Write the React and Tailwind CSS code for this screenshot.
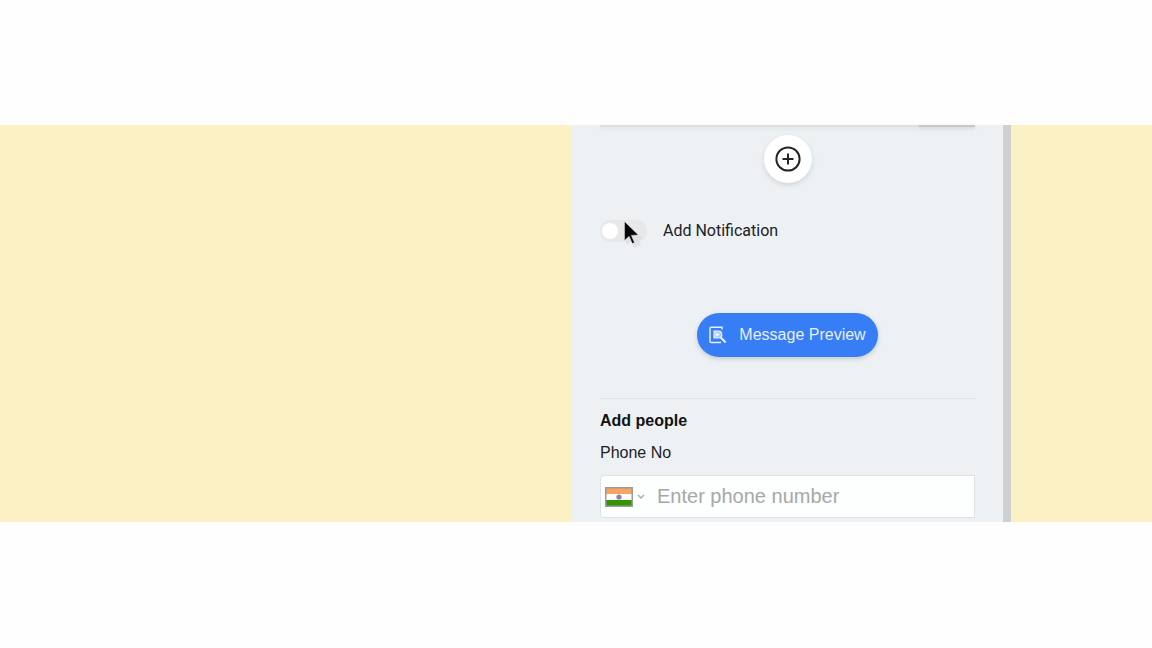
import React from "react";

function PlusCircle() {
  return (
    <svg viewBox="0 0 26 26" className="size-[26px]" fill="none" stroke="#222426" strokeWidth="2" aria-hidden="true">
      <circle cx="13" cy="13" r="11.6" />
      <path d="M13 7.5v11M7.5 13h11" />
    </svg>
  );
}

function PreviewIcon() {
  return (
    <svg viewBox="0 0 18 18" className="size-[18px] shrink-0" fill="none" stroke="#e6efff" strokeWidth="1.5" aria-hidden="true">
      <path d="M13 3.6V1.2H2.2C1.4 1.2 1 1.6 1 2.4v12.8c0 .8.4 1.2 1.2 1.2H12" />
      <path d="M5 5.2h4.4a3.4 3.4 0 0 1 0 6.8H5z" fill="#a9c7fc" strokeWidth="1.2" />
      <path d="M7 6.9l3.4 1.7L7 10.3z" fill="#fff" strokeWidth="1" />
      <path d="M11.8 11.4l4.8 5" strokeWidth="2.2" />
    </svg>
  );
}

function IndiaFlag() {
  return (
    <svg viewBox="0 0 28 20" className="h-5 w-7 shrink-0" aria-hidden="true">
      <rect width="28" height="20" fill="#9b9b9b" />
      <rect x="1.5" y="1.5" width="25" height="5.5" fill="#f8a45c" />
      <rect x="1.5" y="7" width="25" height="6" fill="#fff" />
      <rect x="1.5" y="13" width="25" height="5.5" fill="#319400" />
      <circle cx="14" cy="10" r="2.6" fill="#8580b8" />
    </svg>
  );
}

function Pointer() {
  return (
    <svg viewBox="0 0 20 28" className="pointer-events-none absolute top-0.5 left-6 h-7 w-5" aria-hidden="true">
      <path d="M2 6v18l5-3 3 6 7-3-2-5 4-2z" fill="#d9dbdd" opacity="0.6" />
      <path d="M0.5 0.5v19l4.6-4.2 3.2 7.3 2.2-1-3.2-7.2 7-.5z" fill="#050505" stroke="#fff" strokeWidth="0.4" />
    </svg>
  );
}

export default function App() {
  return (
    <main className="min-h-screen bg-[#fefefe] py-[125px] font-['Liberation_Sans',Arial,sans-serif] text-[#202224]">
      <div className="grid grid-cols-[572fr_439fr_141fr] bg-[#fcf0c5]">
        <section className="col-start-2 flex">
          <div className="flex min-w-0 flex-1 flex-col bg-[#edf1f4] px-7 pb-1">
            <div className="flex h-0.5 justify-end bg-[#dce0e2] shadow-[0_2px_4px_#dadee1]">
              <div className="w-14 bg-[#c6c9cc] shadow-sm" />
            </div>

            <button
              type="button"
              aria-label="Add block"
              className="mt-2 flex size-12 items-center justify-center self-center rounded-full bg-white shadow-[0_2px_5px_#d0d3d6]"
            >
              <PlusCircle />
            </button>

            <label className="relative mt-9 flex h-6 items-center gap-4 font-[Roboto,sans-serif] text-base">
              <input type="checkbox" role="switch" className="peer sr-only" />
              <span className="flex h-[22px] w-[47px] items-center rounded-full bg-[#e6e8ea] px-0.5">
                <span className="size-4 rounded-full bg-white" />
              </span>
              Add Notification
              <Pointer />
            </label>

            <button
              type="button"
              className="mt-[70px] flex h-11 items-center gap-3 self-center rounded-full bg-[#377df5] px-3 text-base text-[#e6efff] shadow-[0_2px_5px_#c6cbd0]"
            >
              <PreviewIcon />
              Message Preview
            </button>

            <hr className="mt-[41px] border-[#e2e5e7]" />

            <h2 className="mt-2.5 text-base leading-6 font-bold text-[#121314]">Add people</h2>
            <label htmlFor="phone" className="mt-2 text-base leading-6">
              Phone No
            </label>

            <div className="mt-2.5 flex h-[43px] items-center rounded-l border border-[#dfe2e4] bg-[#fdfefe] pl-1">
              <button type="button" aria-label="Country: India" className="flex items-center gap-1">
                <IndiaFlag />
                <svg viewBox="0 0 8 6" className="h-1.5 w-2" fill="none" stroke="#a9acae" strokeWidth="1.5" aria-hidden="true">
                  <path d="M1 1l3 3 3-3" />
                </svg>
              </button>
              <input
                id="phone"
                type="tel"
                placeholder="Enter phone number"
                className="ml-3 h-full min-w-0 flex-1 bg-transparent text-xl outline-none placeholder:text-[#a5a8aa]"
              />
            </div>
          </div>
          <div className="w-2 bg-[#cfd0d2]" />
        </section>
      </div>
    </main>
  );
}
